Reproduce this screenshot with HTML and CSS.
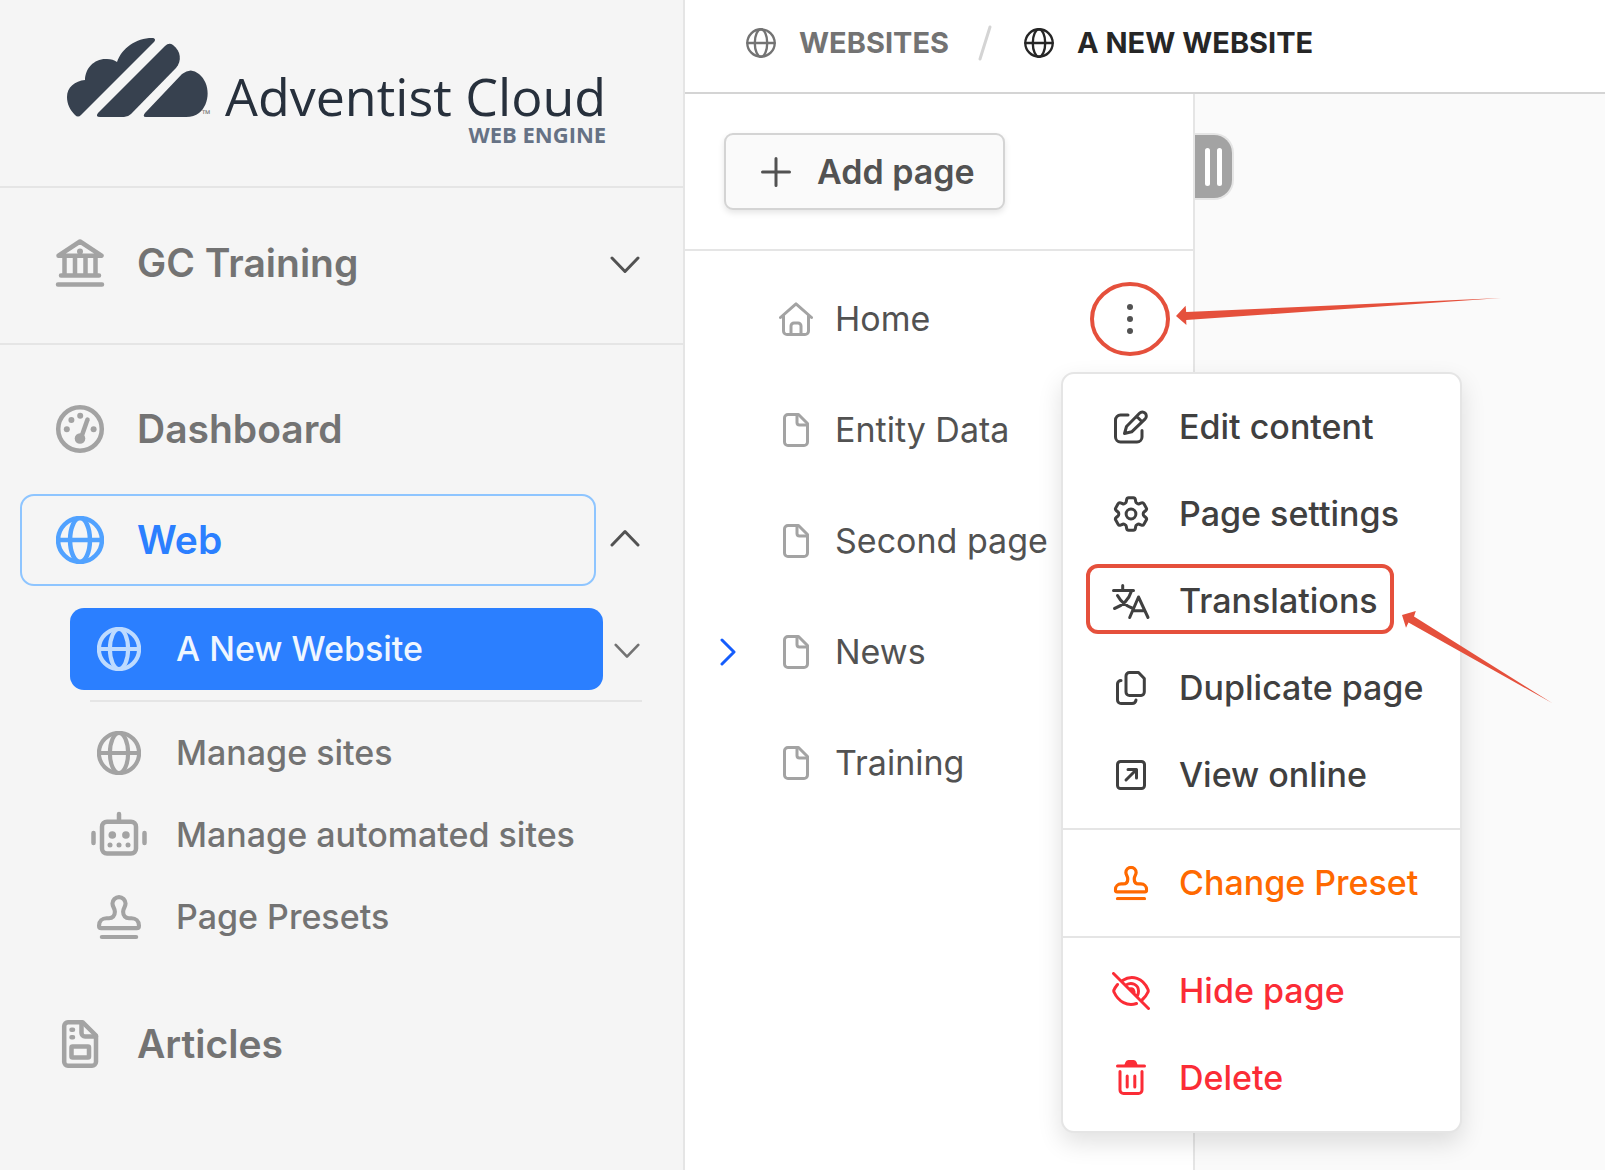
FILE: index.html
```html
<!DOCTYPE html>
<html lang="en">
<head>
    <meta charset="UTF-8">
    <meta name="viewport" content="width=device-width, initial-scale=1.0">
    <title>Adventist Cloud Web Engine</title>
    <link rel="stylesheet" href="styles.css">
</head>
<body>
    <!-- Shared icons -->
    <svg class="sprite" aria-hidden="true">
        <symbol id="globe" viewBox="0 0 512 512">
            <circle cx="256" cy="256" r="234"/>
            <ellipse cx="256" cy="256" rx="106" ry="234"/>
            <path d="M24 256H488"/>
        </symbol>
        <symbol id="stamp" viewBox="0 0 512 512">
            <path d="M256 24C215 24 180 58 180 100C180 140 208 150 208 195C208 245 180 270 140 270H110C62 270 24 305 24 355V360C24 375 35 386 50 386H462C477 386 488 375 488 360V355C488 305 450 270 402 270H372C332 270 304 245 304 195C304 150 332 140 332 100C332 58 297 24 256 24Z"/>
            <path d="M56 488H456"/>
        </symbol>
        <symbol id="file" viewBox="0 0 26 34">
            <path d="M5 1.5H15.5L24.5 10.5V29A3.5 3.5 0 0 1 21 32.5H5A3.5 3.5 0 0 1 1.5 29V5A3.5 3.5 0 0 1 5 1.5Z"/>
            <path d="M14 2V9.5A2.5 2.5 0 0 0 16.5 12H24"/>
        </symbol>
        <symbol id="down" viewBox="0 0 30 18">
            <path d="M2 2L15 15.5L28 2"/>
        </symbol>
    </svg>

    <div class="layout">
        <aside class="sidebar">
            <a href="#" class="logo">
                <svg class="logo-cloud" viewBox="0 0 142 80" aria-hidden="true">
                    <path d="M85 0C88 0 89 2 87 4L14 77C12 79 10 79 8 77C3 72 0 66 0 59C0 49 8 43 18 42C18 30 28 20 40 21Q46 21 50 24C55 10 69 0 85 0Z"/>
                    <path d="M98 8Q102 4 106 7C114 13 115 23 109 30L64 76Q61 79 57 79H33Q28 79 31 75Z"/>
                    <path d="M115 36Q124 29 132 36C144 46 143 66 132 75Q127 79 119 79H79Q75 79 78 75Z"/>
                </svg>
                <span class="logo-tm">™</span>
                <span class="logo-text">
                    <span class="logo-name">Adventist Cloud</span>
                    <span class="logo-sub">WEB ENGINE</span>
                </span>
            </a>

            <div class="org">
                <button class="nav-item">
                    <svg class="icon" viewBox="0 0 48 48">
                        <path d="M24 2.5L45.500 16.700H2.500ZM8.500 18V36M19 18V36M29.500 18V36M39.500 18V36M5 36.500H43M2 45.500H46"/>
                        <circle class="solid" cx="24" cy="12.500" r="3"/>
                    </svg>
                    GC Training
                </button>
                <button class="toggle" aria-label="Switch organisation"><svg><use href="#down"/></svg></button>
            </div>

            <nav class="nav">
                <a href="#" class="nav-item">
                    <svg class="icon" viewBox="0 0 48 48">
                        <circle cx="24" cy="24" r="21.800"/>
                        <path d="M31.500 14.500L25 33"/>
                        <circle class="solid" cx="24" cy="33.500" r="5.300"/>
                        <g class="solid">
                            <circle cx="10.800" cy="24.300" r="3"/>
                            <circle cx="15.400" cy="15" r="3"/>
                            <circle cx="24.200" cy="10.700" r="3"/>
                            <circle cx="37.600" cy="24.300" r="3"/>
                        </g>
                    </svg>
                    Dashboard
                </a>
                <div class="nav-row">
                    <a href="#" class="nav-item current">
                        <svg class="icon globe"><use href="#globe"/></svg>
                        Web
                    </a>
                    <button class="toggle open" aria-label="Collapse Web"><svg><use href="#down"/></svg></button>
                </div>
                <div class="subnav">
                    <div class="nav-row">
                        <a href="#" class="sub-item active">
                            <svg class="icon globe"><use href="#globe"/></svg>
                            A New Website
                        </a>
                        <button class="toggle small" aria-label="Expand A New Website"><svg><use href="#down"/></svg></button>
                    </div>
                    <hr class="subnav-line">
                    <a href="#" class="sub-item">
                        <svg class="icon globe"><use href="#globe"/></svg>
                        Manage sites
                    </a>
                    <a href="#" class="sub-item">
                        <svg class="icon" viewBox="6 1 44 44">
                            <rect x="11" y="9.700" width="34" height="31.800" rx="5"/>
                            <path d="M28 2V9M2.500 21V31M53.500 21V31"/>
                            <g class="solid">
                                <circle cx="21.300" cy="23" r="3.800"/>
                                <circle cx="34.900" cy="23" r="3.800"/>
                                <circle cx="19" cy="33" r="2.500"/>
                                <circle cx="28" cy="33" r="2.500"/>
                                <circle cx="37" cy="33" r="2.500"/>
                            </g>
                        </svg>
                        Manage automated sites
                    </a>
                    <a href="#" class="sub-item">
                        <svg class="icon globe"><use href="#stamp"/></svg>
                        Page Presets
                    </a>
                </div>
                <a href="#" class="nav-item">
                    <svg class="icon" viewBox="-6 0 48 48">
                        <path d="M6 2.200H20.500L34 15.500V42A4 4 0 0 1 30 45.800H6A4 4 0 0 1 2.200 42V6A4 4 0 0 1 6 2.200Z"/>
                        <path d="M19.500 3V13A3.500 3.500 0 0 0 23 16.500H34M9.500 9.700H11M9.500 17.300H11"/>
                        <rect x="9.500" y="26.500" width="17.500" height="11" rx="1"/>
                    </svg>
                    Articles
                </a>
            </nav>
        </aside>

        <main class="main">
            <header class="breadcrumb">
                <a href="#"><svg class="crumb-icon"><use href="#globe"/></svg>WEBSITES</a>
                <svg class="slash" viewBox="0 0 14 36"><path d="M12 2L2 34"/></svg>
                <a href="#" class="here"><svg class="crumb-icon"><use href="#globe"/></svg>A NEW WEBSITE</a>
            </header>

            <div class="workspace">
                <section class="pages">
                    <div class="pages-top">
                        <button class="add-page">
                            <svg viewBox="0 0 30 30"><path d="M15 1.500V28.500M1.500 15H28.500"/></svg>
                            Add page
                        </button>
                    </div>
                    <ul class="tree">
                        <li>
                            <svg class="page-icon" viewBox="0 0 34 34">
                                <path d="M1.500 15.500L17 1.800L32.500 15.500M4.500 13V29A3.500 3.500 0 0 0 8 32.500H26A3.500 3.500 0 0 0 29.500 29V13M12 32V24A3 3 0 0 1 15 21H19A3 3 0 0 1 22 24V32"/>
                            </svg>
                            <a href="#">Home</a>
                            <div class="more">
                                <button aria-label="Page actions">
                                    <svg viewBox="0 0 6 30"><circle cx="3" cy="3" r="3"/><circle cx="3" cy="15" r="3"/><circle cx="3" cy="27" r="3"/></svg>
                                </button>
                                <svg class="ring" viewBox="0 0 80 74"><ellipse cx="40" cy="37" rx="38" ry="35"/></svg>
                                <svg class="arrow arrow-more" viewBox="0 0 326 28"><path d="M0 18L9.600 7.700L10.200 14L325 0L10.200 22L10.400 27Z"/></svg>
                            </div>
                        </li>
                        <li><svg class="page-icon"><use href="#file"/></svg><a href="#">Entity Data</a></li>
                        <li><svg class="page-icon"><use href="#file"/></svg><a href="#">Second page</a></li>
                        <li>
                            <button class="expand" aria-label="Expand News"><svg viewBox="0 0 16 28"><path d="M2 2L14 14L2 26"/></svg></button>
                            <svg class="page-icon"><use href="#file"/></svg><a href="#">News</a>
                        </li>
                        <li><svg class="page-icon"><use href="#file"/></svg><a href="#">Training</a></li>
                    </ul>

                    <!-- Page actions menu -->
                    <div class="menu">
                        <div class="menu-group">
                            <button class="menu-item">
                                <svg viewBox="-2 -2 38 38"><path d="M14 5H6.500A5 5 0 0 0 1.500 10V27A5 5 0 0 0 6.500 32H23A5 5 0 0 0 28 27V20.500M10.500 23.500L12.500 16.500L25.500 3.300A3.900 3.900 0 0 1 31.200 8.800L17.700 21.800ZM22.800 6.500L28 11.700"/></svg>
                                Edit content
                            </button>
                            <button class="menu-item">
                                <svg class="gear" viewBox="1.500 1.500 21 21"><path d="M9.594 3.940c.09-.542.56-.94 1.110-.94h2.593c.55 0 1.020.398 1.110.94l.213 1.281c.063.374.313.686.645.87.074.04.147.083.22.127.325.196.72.257 1.075.124l1.217-.456a1.125 1.125 0 0 1 1.370.49l1.296 2.247a1.125 1.125 0 0 1-.26 1.431l-1.003.827c-.293.241-.438.613-.43.992a7.723 7.723 0 0 1 0 .255c-.008.378.137.75.43.991l1.004.827c.424.35.534.955.26 1.430l-1.298 2.247a1.125 1.125 0 0 1-1.369.491l-1.217-.456c-.355-.133-.75-.072-1.076.124a6.470 6.470 0 0 1-.22.128c-.331.183-.581.495-.644.869l-.213 1.281c-.09.543-.56.94-1.110.94h-2.594c-.55 0-1.019-.398-1.110-.94l-.213-1.281c-.062-.374-.312-.686-.644-.87a6.520 6.520 0 0 1-.22-.127c-.325-.196-.72-.257-1.076-.124l-1.217.456a1.125 1.125 0 0 1-1.369-.49l-1.297-2.247a1.125 1.125 0 0 1 .26-1.431l1.004-.827c.292-.24.437-.613.43-.991a6.932 6.932 0 0 1 0-.255c.007-.38-.138-.751-.43-.992l-1.004-.827a1.125 1.125 0 0 1-.26-1.430l1.297-2.247a1.125 1.125 0 0 1 1.370-.491l1.216.456c.356.133.751.072 1.076-.124.072-.044.146-.086.22-.128.332-.183.582-.495.644-.869l.214-1.280Z"/><circle cx="12" cy="12" r="2.700"/></svg>
                                Page settings
                            </button>
                            <button class="menu-item marked">
                                <svg viewBox="0 -2 38 38"><path d="M1.500 6.500H21.500M10.700 1.500V6.500M19.500 7C17 15 11 21.500 2.500 24.500M5.500 11.500C8.500 17 13.500 21.500 20 24M17.700 33.500L26.500 13L36 33.500M21 26.700H32.500"/></svg>
                                Translations
                                <svg class="arrow arrow-item" viewBox="0 0 152 94"><path d="M0 4L13.800 0L12 5.500L150.500 92.300L6.500 11.500L4 16.700Z"/></svg>
                            </button>
                            <button class="menu-item">
                                <svg viewBox="-4 -2 38 38"><path d="M13.500 1.500H22.500L28.300 7.500V21A3.500 3.500 0 0 1 25 24.500H13.500A3.500 3.500 0 0 1 10 21V5A3.500 3.500 0 0 1 13.500 1.500ZM5 9.500A3.500 3.500 0 0 0 1.500 13V29A3.500 3.500 0 0 0 5 32.500H16A4 4 0 0 0 20 29"/></svg>
                                Duplicate page
                            </button>
                            <button class="menu-item">
                                <svg viewBox="-4 -4 38 38"><rect x="1.500" y="1.500" width="27" height="27" rx="3"/><path d="M10 20L20 10M12 9.500H20.500V18"/></svg>
                                View online
                            </button>
                        </div>
                        <div class="menu-group">
                            <button class="menu-item preset">
                                <svg class="globe" viewBox="-26 -26 564 564"><use href="#stamp" width="512" height="512"/></svg>
                                Change Preset
                            </button>
                        </div>
                        <div class="menu-group">
                            <button class="menu-item danger">
                                <svg viewBox="0 0 38 38"><path d="M1.500 1.500L36.500 36.500M10.500 8.500C20 2.500 31 6 36 17.500Q36.500 19 36 20Q34 24.500 30.500 27.500M5.500 12.500Q3 15.500 2 18Q1.500 19 2 20C6.500 30 15.500 34.500 24.500 31.500M14 13C19.500 9.500 26.500 12.500 26.500 19Q26.500 21.500 25.500 23.500"/><path class="solid" d="M17 15.500Q22.500 14 23.500 19.500V23Z"/></svg>
                                Hide page
                            </button>
                            <button class="menu-item danger">
                                <svg viewBox="-4 -1 38 38"><path d="M1.500 6H28.500M4 11.500V30A3.500 3.500 0 0 0 7.500 33.500H22.500A3.500 3.500 0 0 0 26 30V11.500M11.200 16V27M18.800 16V27"/><path class="solid" d="M8 6L9.500 2Q10.500 0 12.500 0H17.500Q19.500 0 20.500 2L22 6Z"/></svg>
                                Delete
                            </button>
                        </div>
                    </div>
                </section>
                <section class="canvas">
                    <button class="handle" aria-label="Resize panel"><span></span><span></span></button>
                </section>
            </div>
        </main>
    </div>
</body>
</html>
```
FILE: styles.css
```css
*,
*::before {
    margin: 0;
    padding: 0;
    box-sizing: border-box;
}

body {
    font-family: Inter, sans-serif;
    font-size: 34px;
    line-height: 42px;
    color: #525252;
    background: #fff;
}

a {
    color: inherit;
    text-decoration: none;
}

button {
    font: inherit;
    color: inherit;
    background: none;
    border: 0;
    cursor: pointer;
}

svg {
    display: block;
    flex-shrink: 0;
    fill: none;
    stroke: currentColor;
    stroke-linecap: round;
    stroke-linejoin: round;
}

.sprite {
    position: absolute;
    width: 0;
    height: 0;
}

.solid {
    fill: currentColor;
    stroke: none;
}

.layout {
    display: flex;
    min-height: 100vh;
}

/* Sidebar */
.sidebar {
    flex: 0 0 685px;
    background: #f5f5f5;
    border-right: 2px solid #e5e5e5;
    color: #737373;
}

.logo {
    display: flex;
    align-items: flex-start;
    height: 188px;
    padding: 38px 0 0 67px;
    border-bottom: 2px solid #e5e5e5;
    font-family: "Open Sans", "Noto Sans", sans-serif;
}

.logo-cloud {
    width: 142px;
    height: 80px;
    fill: #37414f;
    stroke: none;
}

.logo-tm {
    align-self: flex-start;
    width: 14px;
    margin-top: 70px;
    margin-left: -7px;
    font-size: 11px;
    line-height: 12px;
}

.logo-text {
    display: flex;
    flex-direction: column;
    align-items: flex-end;
    gap: 4px;
    margin-left: 9px;
    padding-top: 29px;
}

.logo-name {
    font-size: 52px;
    line-height: 58px;
    color: #27303c;
}

.logo-sub {
    font-size: 22px;
    font-weight: 700;
    line-height: 10px;
    color: #667285;
}

.org {
    display: flex;
    align-items: center;
    height: 157px;
    padding: 0 0 6px 20px;
    border-bottom: 2px solid #e5e5e5;
}

.nav {
    display: flex;
    flex-direction: column;
    padding: 38px 0 0 20px;
}

.nav-row {
    display: flex;
    align-items: center;
}

.nav-item {
    display: flex;
    align-items: center;
    gap: 33px;
    width: 576px;
    height: 92px;
    padding-left: 34px;
    border: 2px solid transparent;
    border-radius: 14px;
    font-size: 39px;
    font-weight: 600;
}

.nav > .nav-row {
    margin-top: 19px;
}

.icon {
    width: 48px;
    height: 48px;
    color: #a3a3a3;
    stroke-width: 4.5px;
    overflow: visible;
}

.globe {
    stroke-width: 48px;
}

.current {
    color: #2b7fff;
    border-color: #8ec5ff;
}

.current .icon {
    color: #51a2ff;
}

.toggle {
    margin-left: 14px;
    padding-top: 4px;
    color: #525252;
}

.toggle svg {
    width: 30px;
    height: 18px;
    stroke-width: 3px;
}

.open {
    padding: 0 0 4px;
}

.open svg {
    transform: rotate(180deg);
}

.small {
    margin-left: 11px;
    color: #737373;
}

.small svg {
    width: 26px;
    height: 16px;
}

.subnav {
    margin: 22px 0 40px 50px;
}

.sub-item {
    display: flex;
    align-items: center;
    gap: 35px;
    width: 533px;
    height: 82px;
    padding-left: 27px;
    border-radius: 14px;
    font-weight: 500;
}

.sub-item .icon {
    width: 44px;
    height: 44px;
}

.active {
    color: #eff6ff;
    background: #2b7fff;
}

.active .icon {
    color: #bedbff;
}

.subnav-line {
    margin: 10px 41px 10px 20px;
    border: 0;
    border-top: 2px solid #e5e5e5;
}

/* Main area */
.main {
    display: flex;
    flex: 1;
    flex-direction: column;
    min-width: 0;
}

.breadcrumb {
    display: flex;
    align-items: center;
    height: 94px;
    padding: 0 61px 7px;
    border-bottom: 2px solid #d4d4d4;
    font-size: 29px;
    font-weight: 700;
    color: #737373;
}

.breadcrumb a {
    display: flex;
    align-items: center;
    gap: 23px;
}

.crumb-icon {
    width: 30px;
    height: 30px;
    stroke-width: 40px;
}

.slash {
    width: 14px;
    height: 36px;
    margin: 0 32px 0 29px;
    color: #d4d4d4;
    stroke-width: 3px;
}

.here {
    color: #262626;
}

.workspace {
    display: flex;
    flex: 1;
}

.pages {
    position: relative;
    flex: 0 0 510px;
    border-right: 2px solid #e5e5e5;
}

.pages-top {
    padding: 39px;
    border-bottom: 2px solid #e5e5e5;
}

.add-page {
    display: flex;
    align-items: center;
    gap: 26px;
    height: 77px;
    padding: 0 28px 0 35px;
    border: 2px solid #d4d4d4;
    border-radius: 9px;
    background: #fafafa;
    box-shadow: 0 3px 6px rgba(0, 0, 0, 0.1);
    font-weight: 600;
}

.add-page svg {
    width: 30px;
    height: 30px;
    stroke-width: 3px;
}

.tree {
    padding-top: 12px;
    list-style: none;
}

.tree li {
    position: relative;
    display: flex;
    align-items: center;
    gap: 22px;
    height: 111px;
    padding: 0 38px 0 94px;
}

.page-icon {
    width: 34px;
    height: 34px;
    color: #a3a3a3;
    stroke-width: 3px;
}

.expand {
    position: absolute;
    left: 35px;
    color: #155dfc;
}

.expand svg {
    width: 16px;
    height: 28px;
    stroke-width: 3px;
}

.more {
    position: relative;
    display: flex;
    justify-content: center;
    width: 50px;
    margin-left: auto;
}

.more button svg {
    width: 6px;
    height: 30px;
    fill: currentColor;
    stroke: none;
}

/* Red callouts */
.ring {
    position: absolute;
    top: -22px;
    left: -15px;
    width: 80px;
    height: 74px;
    color: #e5503c;
    stroke-width: 4px;
}

.arrow {
    position: absolute;
    z-index: 2;
    fill: #e5503c;
    stroke: none;
}

.arrow-more {
    top: -6px;
    left: 71px;
    width: 326px;
    height: 28px;
}

.menu-item .arrow-item {
    top: 54px;
    left: 339px;
    width: 152px;
    height: 94px;
}

.marked::before {
    content: "";
    position: absolute;
    top: 7px;
    left: 23px;
    width: 308px;
    height: 70px;
    border: 4px solid #e5503c;
    border-radius: 12px;
}

/* Page actions menu */
.menu {
    position: absolute;
    z-index: 1;
    top: 278px;
    left: 376px;
    width: 401px;
    border: 2px solid #e5e5e5;
    border-radius: 13px;
    background: #fff;
    box-shadow: 0 10px 24px rgba(0, 0, 0, 0.12);
    color: #404040;
    font-weight: 500;
}

.menu-group {
    padding: 9px 0 10px;
}

.menu-group + .menu-group {
    border-top: 2px solid #e5e5e5;
}

.menu-item {
    position: relative;
    display: flex;
    align-items: center;
    gap: 29px;
    width: 100%;
    height: 87px;
    padding-left: 49px;
    white-space: nowrap;
}

.menu-item svg {
    width: 38px;
    height: 38px;
    stroke-width: 3px;
}

.menu-item .gear {
    stroke-width: calc(3px * 21 / 38);
}

.menu-item .globe {
    stroke-width: 48px;
}

.preset {
    color: #ff6900;
}

.danger {
    color: #fb2c36;
}

.canvas {
    flex: 1;
    padding-top: 41px;
    background: #fafafa;
}

.handle {
    display: flex;
    align-items: center;
    justify-content: center;
    gap: 7px;
    width: 37px;
    height: 63px;
    border-radius: 0 18px 18px 0;
    background: #a3a3a3;
    box-shadow: 0 0 0 2px #e5e5e5;
    clip-path: inset(-2px -2px -2px 0);
}

.handle span {
    width: 5px;
    height: 38px;
    border-radius: 3px;
    background: #fff;
}
```
